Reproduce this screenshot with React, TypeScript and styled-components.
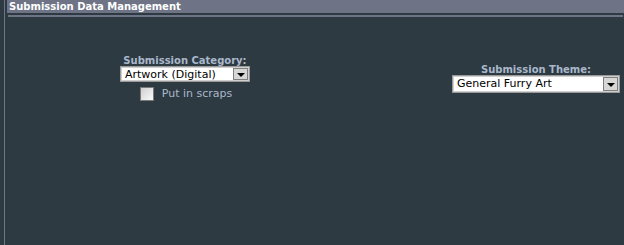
import styled, { createGlobalStyle } from 'styled-components'

const GlobalStyle = createGlobalStyle`
  html, body {
    margin: 0;
    padding: 0;
    background: #2e3a42;
  }
  body {
    font-family: Verdana, "DejaVu Sans", sans-serif;
  }
`

const Page = styled.div`
  width: 624px;
  height: 245px;
  display: flex;
  background: #2e3a42;
  overflow: hidden;
`

const Gutter = styled.div`
  width: 4px;
  border-right: 1px solid #6e7386;
  margin-right: 2px;
  flex-shrink: 0;
`

const Panel = styled.div`
  flex: 1;
  display: flex;
  flex-direction: column;
`

const Header = styled.div`
  height: 13px;
  background: #6e7386;
  color: #fff;
  font-family: "DejaVu Sans", Verdana, sans-serif;
  font-weight: bold;
  font-size: 10px;
  line-height: 13px;
  padding-left: 2px;
  border-bottom: 2px solid #2e3a42;
  box-shadow: 0 3px 0 -1px #6e7386;
  white-space: nowrap;
`

const Row = styled.div`
  display: flex;
  align-items: center;
  margin-top: 40px;
`

const LeftCell = styled.div`
  width: 356px;
  display: flex;
  flex-direction: column;
  align-items: center;
`

const RightCell = styled.div`
  flex: 1;
  display: flex;
  justify-content: flex-end;
  padding-right: 4px;
`

const Group = styled.div`
  display: flex;
  flex-direction: column;
  align-items: center;
`

const Label = styled.div`
  color: #a9b8cb;
  font-family: "DejaVu Sans", Verdana, sans-serif;
  font-weight: bold;
  font-size: 10px;
  line-height: 11px;
  white-space: nowrap;
`

const Select = styled.div<{ $w: number; $h: number }>`
  width: ${(p) => p.$w}px;
  height: ${(p) => p.$h}px;
  box-sizing: border-box;
  background: #fff;
  border: 1px solid #9a9a9a;
  outline: 1px solid #d0d0d0;
  outline-offset: -2px;
  display: flex;
  align-items: stretch;
`

const SelectText = styled.div`
  flex: 1;
  color: #000;
  font-family: "DejaVu Sans", Verdana, sans-serif;
  font-size: 11px;
  display: flex;
  align-items: center;
  padding-left: 4px;
  white-space: nowrap;
`

const DropButton = styled.div`
  width: 15px;
  margin: 1px;
  box-sizing: border-box;
  background: #d6d6d6;
  border: 1px solid #808080;
  display: flex;
  align-items: center;
  justify-content: center;
`

const Arrow = styled.div`
  width: 0;
  height: 0;
  border-left: 4px solid transparent;
  border-right: 4px solid transparent;
  border-top: 4px solid #000;
  margin-top: 2px;
`

const ScrapsRow = styled.div`
  display: flex;
  align-items: center;
  gap: 8px;
  margin-top: 4px;
  margin-left: 2px;
`

const Checkbox = styled.div`
  width: 14px;
  height: 14px;
  box-sizing: border-box;
  border: 1px solid #7a7a7a;
  background: linear-gradient(135deg, #cfcfcf, #fafafa);
`

const ScrapsText = styled.span`
  color: #a9b8cb;
  font-family: "DejaVu Sans", Verdana, sans-serif;
  font-size: 11px;
  line-height: 14px;
  margin-top: 1px;
`

function DropDown({ value, w, h }: { value: string; w: number; h: number }) {
  return (
    <Select $w={w} $h={h}>
      <SelectText>{value}</SelectText>
      <DropButton>
        <Arrow />
      </DropButton>
    </Select>
  )
}

export default function App() {
  return (
    <>
      <GlobalStyle />
      <Page>
        <Gutter />
        <Panel>
          <Header>Submission Data Management</Header>
          <Row>
            <LeftCell>
              <Group>
                <Label>Submission Category:</Label>
                <DropDown value="Artwork (Digital)" w={130} h={16} />
              </Group>
              <ScrapsRow>
                <Checkbox />
                <ScrapsText>Put in scraps</ScrapsText>
              </ScrapsRow>
            </LeftCell>
            <RightCell>
              <Group>
                <Label>Submission Theme:</Label>
                <DropDown value="General Furry Art" w={168} h={18} />
              </Group>
            </RightCell>
          </Row>
        </Panel>
      </Page>
    </>
  )
}
